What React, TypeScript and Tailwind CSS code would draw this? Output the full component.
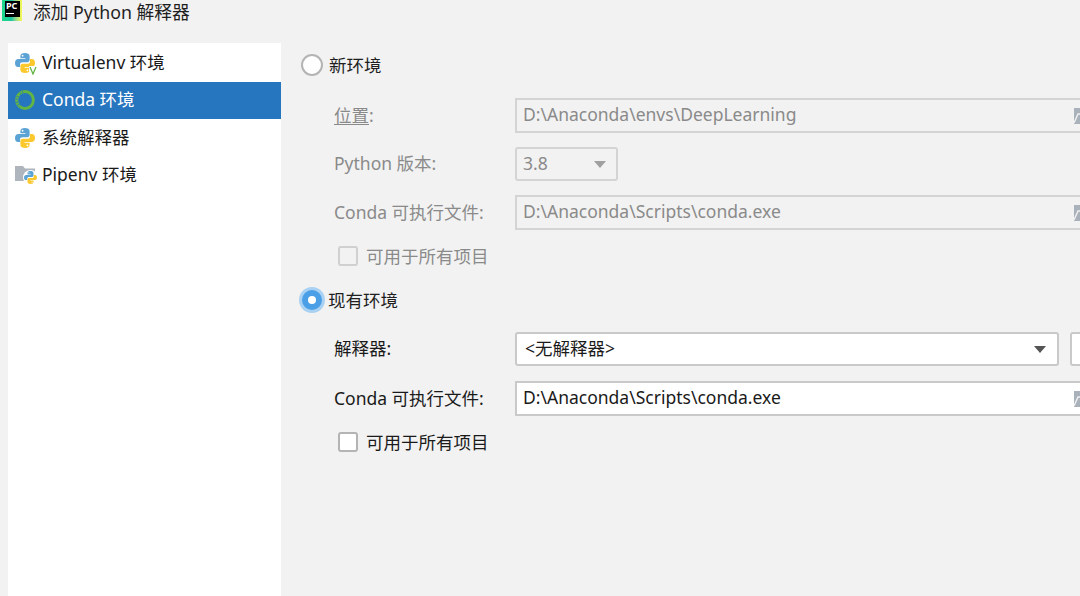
const font = 'font-["Noto_Sans","Noto_Sans_CJK_SC",sans-serif]';

function PythonIcon({ className }: { className: string }) {
  const snake =
    'M10 0C7 0 5.4 1 5.4 3V5.2H10.4V6H3.4C1.4 6 0 7.6 0 10C0 12.5 1.2 14 3 14H5V11.6C5 10 6.2 9.2 7.5 9.2H12.4C13.8 9.2 14.6 8.2 14.6 7V3C14.6 1 12.6 0 10 0Z';
  return (
    <svg viewBox="0 0 20 20" className={className}>
      <path d={snake} fill="#5ba3d4" />
      <circle cx="7.6" cy="2.7" r="0.9" fill="#fff" />
      <g transform="rotate(180 10 10)">
        <path d={snake} fill="#fbc92e" />
        <circle cx="7.6" cy="2.7" r="0.9" fill="#fff" />
      </g>
    </svg>
  );
}

function SideIcon({ type }: { type: string }) {
  if (type === 'conda') {
    return (
      <svg viewBox="0 0 20 20" className="w-5 h-5">
        <circle cx="10" cy="10" r="8.4" fill="none" stroke="#62b543" strokeWidth="3" />
        <path d="M2.6 6A8.4 8.4 0 0 0 5 16.6" fill="none" stroke="#2675bf" strokeWidth="1.4" strokeDasharray="1.2 1.6" />
        <path d="M5 3.4A8.4 8.4 0 0 1 9 1.7" fill="none" stroke="#2675bf" strokeWidth="1.2" strokeDasharray="1 1.4" />
      </svg>
    );
  }
  if (type === 'virtualenv') {
    return (
      <div className="relative w-5 h-5">
        <PythonIcon className="w-5 h-5" />
        <svg viewBox="0 0 8 9" className="absolute left-[14px] top-[13px] w-2 h-[9px]">
          <rect width="8" height="9" fill="#fff" />
          <path d="M1 1L4 8L7 1" fill="none" stroke="#62b543" strokeWidth="1.3" />
        </svg>
      </div>
    );
  }
  if (type === 'pipenv') {
    return (
      <div className="relative w-5 h-5">
        <svg viewBox="0 0 20 20" className="w-5 h-5">
          <path d="M0 1H8L10 3.5H20V16H0Z" fill="#afb5bc" />
        </svg>
        <div className="absolute left-[8px] top-[5px] w-[15px] h-[15px] rounded-full bg-white" />
        <PythonIcon className="absolute left-[9px] top-[6px] w-[13px] h-[13px]" />
      </div>
    );
  }
  return <PythonIcon className="w-5 h-5" />;
}

function BrowseIcon() {
  return (
    <svg viewBox="0 0 22 16" className="w-[22px] h-4 shrink-0">
      <rect width="22" height="16" fill="#a9b1ba" />
      <path d="M0 15L4 6H12" fill="none" stroke="#f2f2f2" strokeWidth="1.4" />
    </svg>
  );
}

function PathField({ value, disabled }: { value: string; disabled?: boolean }) {
  return (
    <div
      className={
        disabled
          ? 'w-[581px] h-[35px] pl-[6px] flex items-center justify-between border-2 border-r-0 border-[#d4d4d4] bg-[#f2f2f2] text-[#8a8a8a]'
          : 'w-[581px] h-[35px] pl-[6px] flex items-center justify-between border-2 border-r-0 border-[#c9c9c9] bg-white text-[#1a1a1a]'
      }
    >
      <span className="pb-[4px]">{value}</span>
      <BrowseIcon />
    </div>
  );
}

function FormRow({ label, disabled, children }: { label: React.ReactNode; disabled?: boolean; children: React.ReactNode }) {
  return (
    <div className="flex items-center">
      <div className={disabled ? 'w-[181px] shrink-0 pb-[2px] text-[#8a8a8a]' : 'w-[181px] shrink-0 pb-[2px] text-[#1a1a1a]'}>{label}</div>
      {children}
    </div>
  );
}

function CheckRow({ disabled }: { disabled?: boolean }) {
  return (
    <div className={disabled ? 'flex items-center gap-2 ml-[4px] mt-[2px] h-5 text-[#8a8a8a]' : 'flex items-center gap-2 ml-[4px] mt-[1px] h-5 text-[#1a1a1a]'}>
      <div
        className={
          disabled
            ? 'w-5 h-5 rounded-[3px] border-2 border-[#d0d0d0] bg-[#f2f2f2]'
            : 'w-5 h-5 rounded-[3px] border-2 border-[#b4b4b4] bg-white'
        }
      />
      <span>可用于所有项目</span>
    </div>
  );
}

const items = [
  { type: 'virtualenv', label: 'Virtualenv 环境' },
  { type: 'conda', label: 'Conda 环境' },
  { type: 'python', label: '系统解释器' },
  { type: 'pipenv', label: 'Pipenv 环境' },
];

export default function App() {
  return (
    <div className={`w-[1080px] h-[596px] overflow-hidden bg-[#f2f2f2] text-[17.5px] leading-6 ${font}`}>
      <div className="h-[43px] pl-[2px] flex items-start gap-[11px] text-[#1f1f1f]">
        <div className="w-5 h-[21px] pl-[3px] pr-[2px] pt-[1px] pb-[4px] bg-gradient-to-r from-[#21d789] via-[#1cc8a0] to-[#fcf84a]">
          <div className="w-full h-full bg-black text-white text-[9px] leading-[10px] font-bold pl-[1px] flex flex-col">
            <span>PC</span>
            <div className="w-[8px] h-[1px] bg-white mt-[2px]" />
          </div>
        </div>
        <div className="text-[17.75px] leading-[25px]">添加 Python 解释器</div>
      </div>
      <div className="flex h-[553px]">
        <div className="ml-2 w-[273px] bg-white pt-[1px] shrink-0">
          {items.map((item) => (
            <div
              key={item.label}
              className={
                item.type === 'conda'
                  ? 'h-[37.5px] pl-[7px] flex items-center gap-[7px] bg-[#2675bf] text-white'
                  : 'h-[37.5px] pl-[7px] flex items-center gap-[7px] text-[#1a1a1a]'
              }
            >
              <SideIcon type={item.type} />
              <span className="pb-[2px]">{item.label}</span>
            </div>
          ))}
        </div>
        <div className="pl-[20px] pt-[11px] flex-1 flex flex-col">
          <div className="flex items-center gap-[6px] h-[22px] text-[#1f1f1f]">
            <div className="w-[22px] h-[22px] rounded-full border-2 border-[#b4b4b4] bg-white" />
            <span className="pb-[1px]">新环境</span>
          </div>
          <div className="ml-[33px] mt-[22px] flex flex-col gap-[14px]">
            <FormRow
              disabled
              label={
                <span>
                  <span className="underline underline-offset-2">位置</span>:
                </span>
              }
            >
              <PathField disabled value="D:\Anaconda\envs\DeepLearning" />
            </FormRow>
            <FormRow disabled label="Python 版本:">
              <div className="w-[103px] h-[34px] pl-[6px] pr-[10px] flex items-center justify-between rounded-[3px] border-2 border-[#d4d4d4] text-[#8a8a8a]">
                <span className="pb-[2px]">3.8</span>
                <div className="w-0 h-0 border-x-[6px] border-t-[7px] border-x-transparent border-t-[#a0a0a0]" />
              </div>
            </FormRow>
            <FormRow disabled label="Conda 可执行文件:">
              <PathField disabled value="D:\Anaconda\Scripts\conda.exe" />
            </FormRow>
            <CheckRow disabled />
          </div>
          <div className="mt-[21px] -ml-[2px] flex items-center gap-[3px] h-[26px] text-[#1f1f1f]">
            <div className="w-[26px] h-[26px] rounded-full bg-[#a9d1f2] flex items-center justify-center">
              <div className="w-[20px] h-[20px] rounded-full bg-[#4a9fe6] flex items-center justify-center">
                <div className="w-2 h-2 rounded-full bg-white" />
              </div>
            </div>
            <span className="pb-[1px]">现有环境</span>
          </div>
          <div className="ml-[33px] mt-[19px] flex flex-col gap-[15px]">
            <FormRow label="解释器:">
              <div className="w-[544px] h-[34px] pl-[8px] pr-[11px] shrink-0 flex items-center justify-between rounded-[3px] border-2 border-[#c9c9c9] bg-white text-[#1a1a1a]">
                <span className="pb-[2px]">&lt;无解释器&gt;</span>
                <div className="w-0 h-0 border-x-[6px] border-t-[7px] border-x-transparent border-t-[#555555]" />
              </div>
              <div className="ml-[11px] w-[40px] h-[34px] shrink-0 rounded-[3px] border-2 border-[#c9c9c9] bg-white" />
            </FormRow>
            <FormRow label="Conda 可执行文件:">
              <PathField value="D:\Anaconda\Scripts\conda.exe" />
            </FormRow>
            <CheckRow />
          </div>
        </div>
      </div>
    </div>
  );
}
